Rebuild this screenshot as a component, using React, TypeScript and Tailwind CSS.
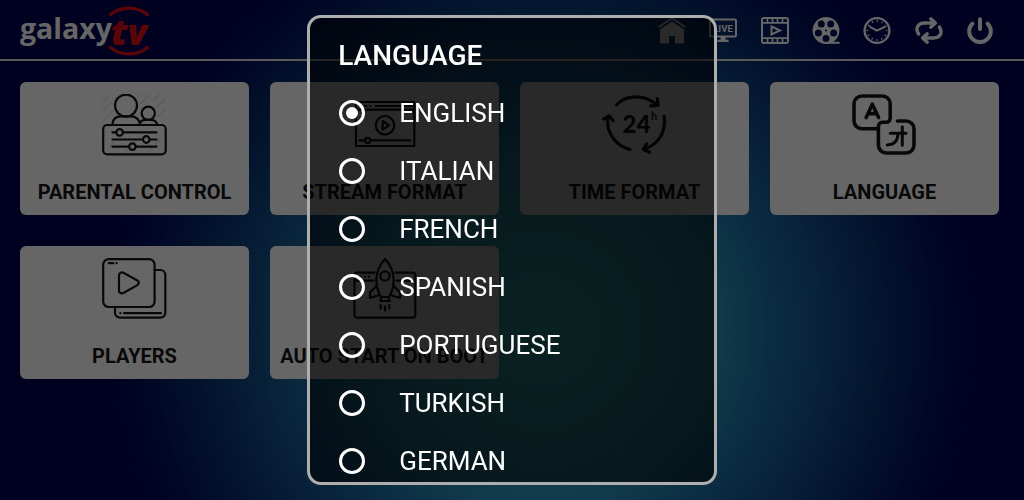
import { useState, type ReactNode } from "react";

const reelHoles = [90, 162, 234, 306, 18].map((deg) => {
  const a = (deg * Math.PI) / 180;
  return { cx: 14 + 8 * Math.cos(a), cy: 13.5 + 8 * Math.sin(a) };
});

const navItems: { name: string; icon: ReactNode }[] = [
  {
    name: "Home",
    icon: (
      <>
        <path d="M0.8 10 14 1.2 27.2 10" fill="none" stroke="currentColor" strokeWidth="1.6" />
        <path d="M14 4.2 26 12.6V26.5H17V19H11V26.5H2V12.6Z" fill="currentColor" />
      </>
    ),
  },
  {
    name: "Live TV",
    icon: (
      <>
        <rect x="1" y="2.5" width="26" height="17" rx="1" fill="none" stroke="currentColor" strokeWidth="2" />
        <text x="14" y="14.8" textAnchor="middle" fontSize="9.6" fontWeight="700" fontFamily="Roboto, sans-serif" fill="currentColor">
          LIVE
        </text>
        <path d="M11.5 19.5h5v3.2h3v2.3h-11v-2.3h3z" fill="currentColor" />
      </>
    ),
  },
  {
    name: "Movies",
    icon: (
      <g fill="none" stroke="currentColor" strokeWidth="2">
        <rect x="1" y="1" width="26" height="25" rx="2" />
        <path d="M1 5.8H27M1 21.2H27M6.5 1v5M11.5 1v5M16.5 1v5M21.5 1v5M6.5 21v5M11.5 21v5M16.5 21v5M21.5 21v5" strokeWidth="1.7" />
        <path d="M10.5 9.5 19 13.5 10.5 17.5Z" />
      </g>
    ),
  },
  {
    name: "Series",
    icon: (
      <>
        <mask id="reel">
          <rect width="28" height="27" fill="white" />
          {reelHoles.map((h) => (
            <circle key={h.cx} cx={h.cx} cy={h.cy} r="3.5" fill="black" />
          ))}
          <circle cx="14" cy="13.5" r="1.1" fill="black" />
        </mask>
        <circle cx="14" cy="13.5" r="13.4" fill="currentColor" mask="url(#reel)" />
        <path d="M14 25.8H27.6" stroke="currentColor" strokeWidth="2" />
      </>
    ),
  },
  {
    name: "Catch up",
    icon: (
      <g fill="none" stroke="currentColor">
        <circle cx="14" cy="13.5" r="12.4" strokeWidth="2.4" />
        <circle cx="14" cy="13.5" r="9.6" strokeWidth="2" strokeDasharray="1.2 3.827" strokeDashoffset="0.6" />
        <path d="M7 9.8 13.8 13.6 21.8 9.8" strokeWidth="2" strokeLinecap="round" />
      </g>
    ),
  },
  {
    name: "Refresh",
    icon: (
      <g fill="none" stroke="currentColor" strokeWidth="3.4" strokeLinecap="round" strokeLinejoin="round">
        <path d="M3.6 17C-.4 10.5 3.5 6 9.5 6H20M15.8 1.8 20.4 6 15.8 10.2" />
        <path d="M24.4 10C28.4 16.5 24.5 21 18.5 21H8M12.2 16.8 7.6 21 12.2 25.2" />
      </g>
    ),
  },
  {
    name: "Power",
    icon: (
      <g fill="none" stroke="currentColor" strokeWidth="4" strokeLinecap="round">
        <path d="M14 2.2V12" />
        <path d="M6.4 6.6A10.8 10.8 0 1 0 21.6 6.6" />
      </g>
    ),
  },
];

const hatch = (
  <path
    d="M1 7 7 1M1 17 9 9M1 27 11 17M36 2 38 0M38 10 48 0M52 6 58 0M52 16 63 5M56 22 63 15"
    opacity="0.12"
    strokeWidth="1.2"
  />
);

const cards: { name: string; icon: ReactNode }[] = [
  {
    name: "PARENTAL CONTROL",
    icon: (
      <>
        {hatch}
        <path d="M8 52 20 40M24 57 40 41M46 58 60 44" opacity="0.12" strokeWidth="1.2" />
        <circle cx="24" cy="11.6" r="11" />
        <path d="M10.5 31C10.5 24.8 14 22.4 19 22.4H28.5C34 22.4 37.5 25.5 38 31" />
        <circle cx="46.3" cy="19.3" r="6.6" />
        <path d="M38.3 28.6C39.5 26.3 41 25.9 44 25.9H48.5C52.5 25.9 54.8 28 55.2 31" />
        <rect x="1.2" y="31" width="62.5" height="29.3" rx="4" />
        <path d="M10.5 38.4H14.3M21 38.4H54.5M10.5 45.5H41M47.6 45.5H54.5M10.5 52.6H27M33.8 52.6H54.5" />
        <circle cx="17.6" cy="38.4" r="3.3" />
        <circle cx="44.3" cy="45.5" r="3.3" />
        <circle cx="30.4" cy="52.6" r="3.3" />
      </>
    ),
  },
  {
    name: "STREAM FORMAT",
    icon: (
      <>
        <path d="M4 8H62.3V52H4ZM4 15.7H62.3M23.5 12H60M18.3 12H18.4M13 12H14.5" />
        <circle cx="33" cy="31.3" r="9.3" />
        <path d="M30.6 27 37 31.3 30.6 35.7Z" />
        <path d="M7.5 46.4H13M18.5 46.4H58.5" />
        <circle cx="15.7" cy="46.4" r="2.6" />
      </>
    ),
  },
  {
    name: "TIME FORMAT",
    icon: (
      <>
        <g strokeWidth="3.2">
          <path d="M14.5 10.8C25 .2 43 .5 54 10.5M55.4 4.6 56 11.5 48.5 11.8" />
          <path d="M6 22.5C3.5 37 13 52 28 55.5M1.6 25 7 21.8 11.2 26.8" />
          <path d="M62 22.3C64.5 38 56.5 50 42 55.5M44.5 50 41.2 55.3 47.5 58.3" />
        </g>
        <text x="34.5" y="39" textAnchor="middle" fontSize="24" fontWeight="900" fontFamily="Lato, sans-serif" fill="currentColor" stroke="none">
          24
        </text>
        <text x="52.2" y="25.5" textAnchor="middle" fontSize="11" fontWeight="700" fontFamily="Lato, sans-serif" fill="currentColor" stroke="none">
          h
        </text>
      </>
    ),
  },
  {
    name: "LANGUAGE",
    icon: (
      <g strokeWidth="3.6">
        <path d="M25 34.8H10A8 8 0 0 1 2 26.8V10A8 8 0 0 1 10 2H30.2A8 8 0 0 1 38.2 10V24.3A4 4 0 0 1 34.2 28.3H30.4A4 4 0 0 0 26.4 32.3V51A8 8 0 0 0 34.4 59H54A8 8 0 0 0 62 51V35A8 8 0 0 0 54 27H45.5" />
        <path d="M14.2 23.6 20.3 10.2 26.6 23.6M16.6 19.6H24.2" />
        <path d="M38.3 39.3H54M50.3 32.8V51.2M46 39.5C45.8 47 42 50.8 35.2 50.9" strokeWidth="3" />
      </g>
    ),
  },
  {
    name: "PLAYERS",
    icon: (
      <>
        <rect x="1.2" y="1.2" width="51.4" height="47.8" rx="5.5" />
        <path d="M52.6 12H58.3A5 5 0 0 1 63.3 17V54.7A5 5 0 0 1 58.3 59.7H18A5 5 0 0 1 13 54.7V49.5" />
        <path d="M18.3 55.2H18.4M22 55.2H59M6.8 5.2H11.2M14.5 5.2H14.6" />
        <path d="M17 17.5C17 14.8 19.5 13.8 21.8 15L35 22.2C37.5 23.6 37.5 26 35 27.4L21.8 34.8C19.5 36 17 35 17 32.4Z" />
      </>
    ),
  },
  {
    name: "AUTO START ON BOOT",
    icon: (
      <>
        {hatch}
        <path d="M8 52 18 42M12 57 22 47M44 56 60 40M54 57 62 49" opacity="0.12" strokeWidth="1.2" />
        <path d="M22.5 14.7H5A2.5 2.5 0 0 0 2.5 17.2V57.2A2.5 2.5 0 0 0 5 59.7H60.8A2.5 2.5 0 0 0 63.3 57.2V17.2A2.5 2.5 0 0 0 60.8 14.7H43.5M2.5 22.7H21.5M44.5 22.7H63.3M8 18.7H8.5M13 18.7H13.1M17 18.7H17.1" />
        <path d="M29 39C22.5 28 22 13 33 1C44 13 43.5 28 37 39Z" />
        <circle cx="33" cy="18" r="4.7" />
        <path d="M29.5 39 28.3 43H37.7L36.5 39M24.8 27.5 18 34.5V40L27.5 37M41.2 27.5 48 34.5V40L38.5 37M28.7 47V50.5M33 48.5V52.5M37.3 47V50.5" />
      </>
    ),
  },
];

const languages = ["ENGLISH", "ITALIAN", "FRENCH", "SPANISH", "PORTUGUESE", "TURKISH", "GERMAN"];

function Logo() {
  return (
    <svg viewBox="0 0 132 52" className="h-[52px] w-[132px]" role="img" aria-label="galaxy tv">
      <text x="0" y="33.6" fontSize="28.5" fontWeight="700" fontFamily="'Open Sans', sans-serif" fill="#ffffff">
        galaxy
      </text>
      <text x="91" y="39.5" fontSize="36" fontWeight="800" fontStyle="italic" fontFamily="'Open Sans', sans-serif" fill="#e01018">
        tv
      </text>
      <g fill="none" stroke="#e01018" strokeWidth="3.2" strokeLinecap="round">
        <path d="M90.5 9.5C101 1 117 1 127.5 9.5" />
        <path d="M90.5 42.5C101 51 117 51 127.5 42.5" />
      </g>
    </svg>
  );
}

function LanguageDialog() {
  const [selected, setSelected] = useState("ENGLISH");
  return (
    <div className="fixed inset-0 flex justify-center bg-black/60 py-[15px]">
      <div
        role="dialog"
        aria-labelledby="language-title"
        className="h-full w-2/5 overflow-hidden rounded-[14px] border-3 border-[#aeaeae] bg-black/60 px-7 pt-[22px] text-white"
      >
        <h2 id="language-title" className="mb-3 text-[28px] leading-8 font-medium">
          LANGUAGE
        </h2>
        <div role="radiogroup" aria-labelledby="language-title">
          {languages.map((language) => (
            <label key={language} className="flex h-[58px] items-center gap-[34px] pl-px text-[26px] leading-8">
              <input
                type="radio"
                name="language"
                checked={selected === language}
                onChange={() => setSelected(language)}
                className="grid h-[26px] w-[26px] shrink-0 appearance-none place-items-center rounded-full border-3 border-white checked:before:h-3 checked:before:w-3 checked:before:rounded-full checked:before:bg-white checked:before:content-['']"
              />
              {language}
            </label>
          ))}
        </div>
      </div>
    </div>
  );
}

export default function App() {
  return (
    <div className="min-h-screen bg-[#000050] bg-[radial-gradient(circle_at_53%_330px,#3cccd0_0px,#34b0bc_100px,#2a91b8_175px,#1b6ca0_235px,#114f8a_290px,#083070_345px,#031460_395px,#000050_445px)] font-['Roboto',sans-serif]">
      <header className="flex h-[61px] items-center justify-between border-b-2 border-[#e0e0e0] pt-0.5 pr-[30px] pl-5">
        <Logo />
        <nav className="flex w-[336px] justify-between text-white">
          {navItems.map((item) => (
            <button key={item.name} type="button" aria-label={item.name}>
              <svg viewBox="0 0 28 27" className="block h-[27px] w-7">
                {item.icon}
              </svg>
            </button>
          ))}
        </nav>
      </header>
      <main className="grid grid-cols-4 gap-x-[21px] gap-y-[31px] pt-[21px] pr-[25px] pl-5">
        {cards.map((card) => (
          <button
            key={card.name}
            type="button"
            className="flex h-[133px] flex-col items-center justify-between rounded-md bg-white pt-3 pb-[11px] text-[#161616]"
          >
            <svg
              viewBox="0 0 65 62"
              className="h-[62px] w-[65px]"
              fill="none"
              stroke="currentColor"
              strokeWidth="2.2"
              strokeLinecap="round"
              strokeLinejoin="round"
            >
              {card.icon}
            </svg>
            <span className="text-[20px] leading-6 font-bold whitespace-nowrap">{card.name}</span>
          </button>
        ))}
      </main>
      <LanguageDialog />
    </div>
  );
}
